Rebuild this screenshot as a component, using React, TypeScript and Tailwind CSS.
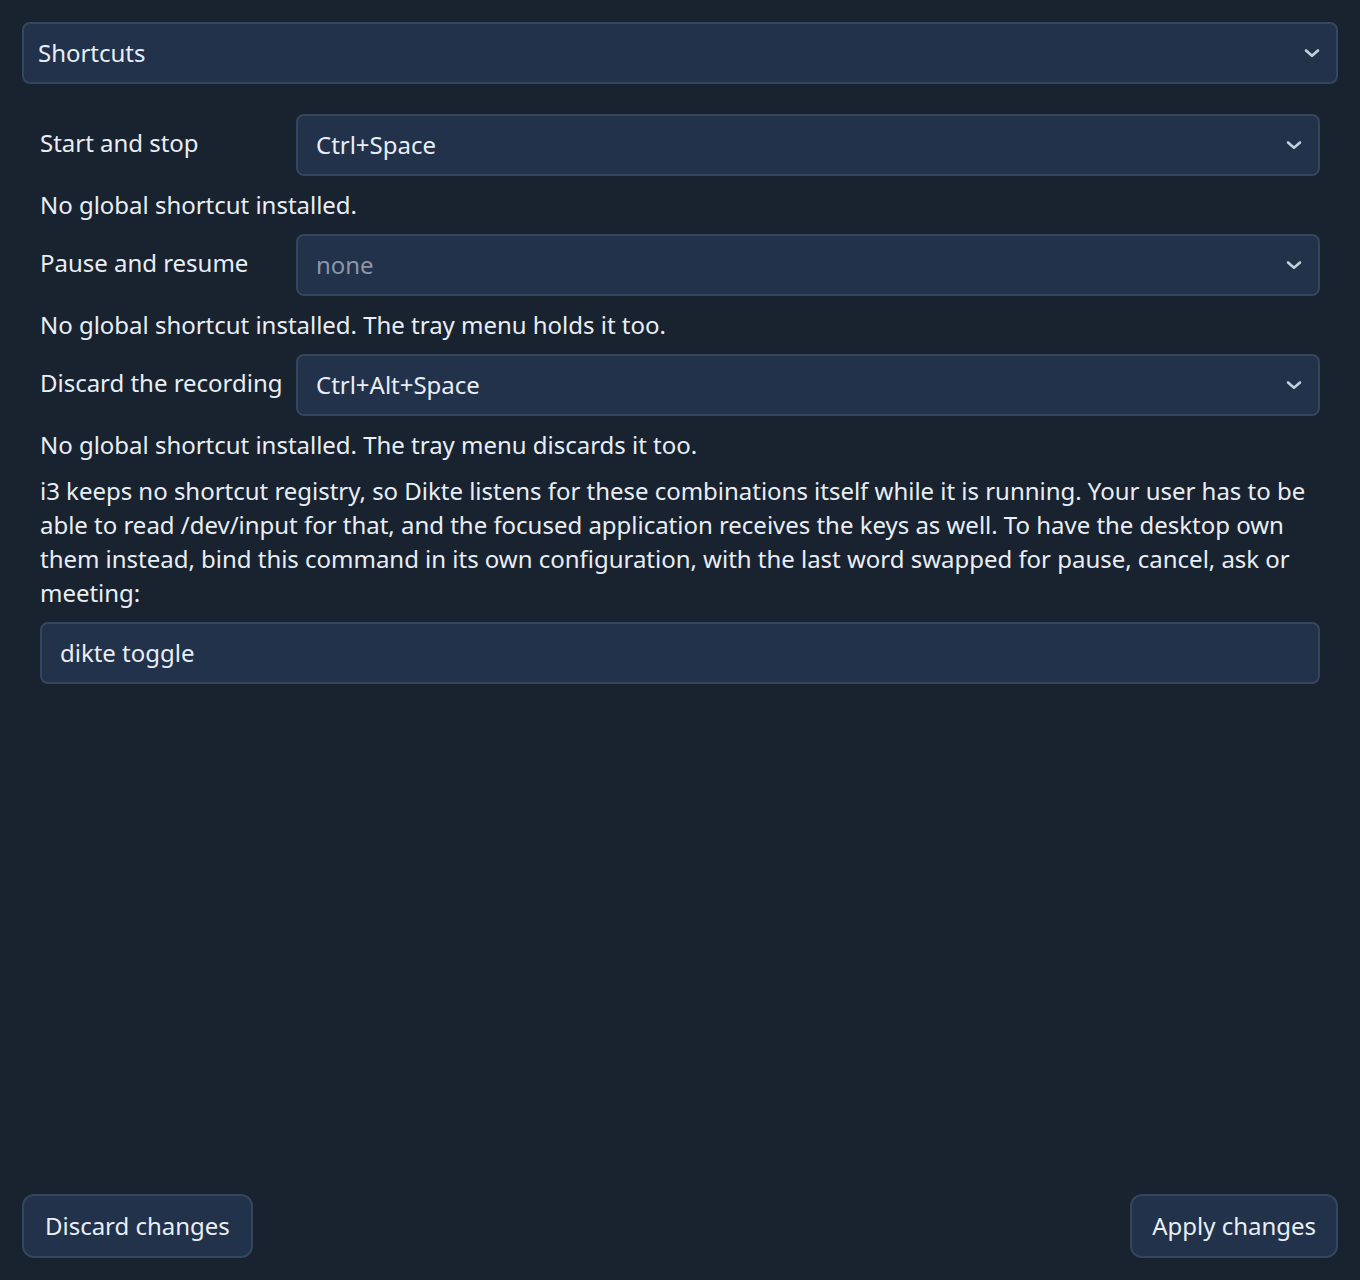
import React from "react";

const Chevron = () => (
  <svg width="16" height="10" viewBox="0 0 16 10" fill="none" className="shrink-0">
    <path d="M2 2.5 L8 7.8 L14 2.5" stroke="#c4cfdd" strokeWidth="2.6" strokeLinecap="round" strokeLinejoin="round" />
  </svg>
);

function Select({ value, placeholder }: { value: string; placeholder?: boolean }) {
  return (
    <div className="flex h-[62px] items-center justify-between rounded-lg border-2 border-[#34465d] bg-[#22324a] pl-[18px] pr-[16px]">
      <span className={placeholder ? "text-[#8a97a8]" : "text-[#e8eef5]"}>{value}</span>
      <Chevron />
    </div>
  );
}

function Row({ label, value, help, placeholder }: { label: string; value: string; help: string; placeholder?: boolean }) {
  return (
    <>
      <div className="grid grid-cols-[256px_1fr] items-center">
        <span className="-mt-[4px]">{label}</span>
        <Select value={value} placeholder={placeholder} />
      </div>
      <p>{help}</p>
    </>
  );
}

export default function App() {
  return (
    <div
      className="flex h-[1280px] w-full flex-col bg-[#19232f] p-[22px] text-[24px] leading-[34px] tracking-[-0.02px] text-[#e8eef5]"
      style={{ fontFamily: '"Noto Sans", sans-serif' }}
    >
      <div className="flex h-[62px] items-center justify-between rounded-lg border-2 border-[#34465d] bg-[#22324a] pl-[14px] pr-[16px]">
        <span>Shortcuts</span>
        <Chevron />
      </div>

      <div className="mt-[30px] flex flex-col gap-3 px-[18px]">
        <Row label="Start and stop" value="Ctrl+Space" help="No global shortcut installed." />
        <Row label="Pause and resume" value="none" placeholder help="No global shortcut installed. The tray menu holds it too." />
        <Row label="Discard the recording" value="Ctrl+Alt+Space" help="No global shortcut installed. The tray menu discards it too." />
        <p>
          i3 keeps no shortcut registry, so Dikte listens for these combinations itself while it is running. Your user has to be able to read /dev/input for that, and the focused application receives the keys as well. To have the desktop own them instead, bind this command in its own configuration, with the last word swapped for pause, cancel, ask or meeting:
        </p>
        <div className="flex h-[62px] items-center rounded-lg border-2 border-[#34465d] bg-[#22324a] px-[18px]">
          <span>dikte toggle</span>
        </div>
      </div>

      <div className="mt-auto flex items-center justify-between">
        <button className="h-[64px] rounded-xl border-2 border-[#34465d] bg-[#22324a] px-[21px] text-[#e8eef5]">
          Discard changes
        </button>
        <button className="h-[64px] rounded-xl border-2 border-[#34465d] bg-[#22324a] px-[20px] text-[#e8eef5]">
          Apply changes
        </button>
      </div>
    </div>
  );
}
